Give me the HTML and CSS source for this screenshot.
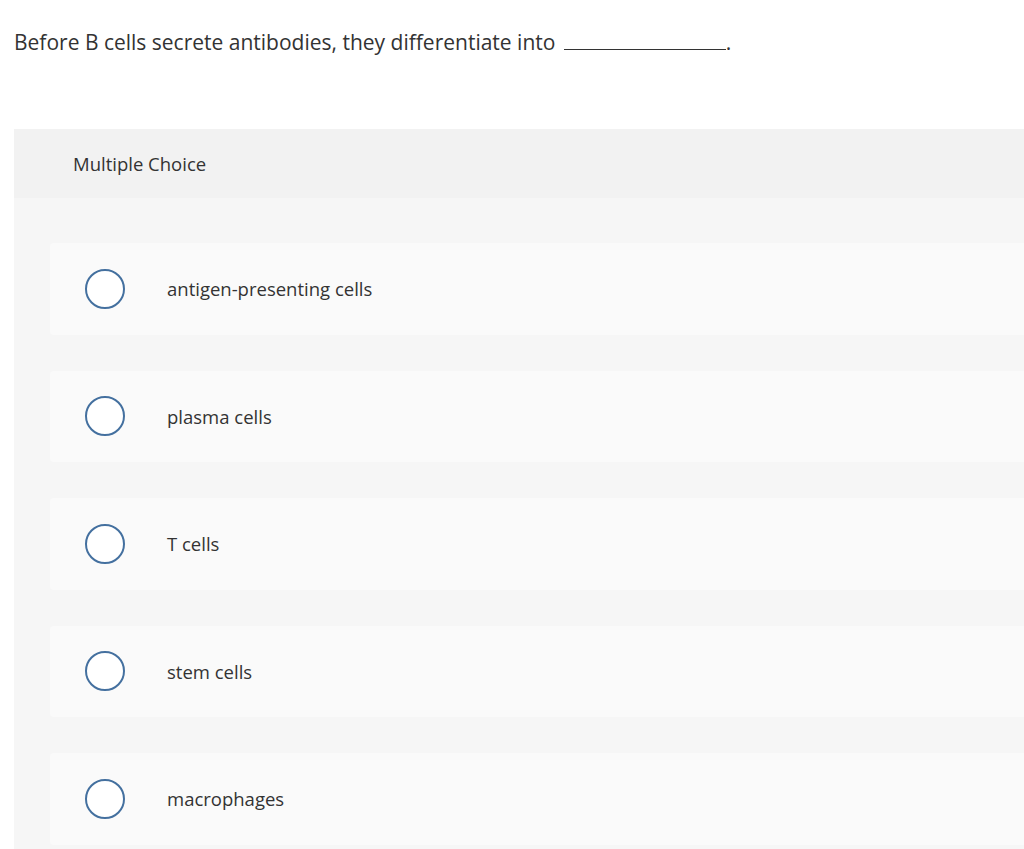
FILE: index.html
```html
<!DOCTYPE html>
<html>
<head>
<meta charset="utf-8">
<link rel="stylesheet" href="styles.css">
</head>
<body>
<div class="page">
  <p class="question">Before B cells secrete antibodies, they differentiate into <span class="blank"></span>.</p>
  <div class="panel">
    <div class="panel-head">Multiple Choice</div>
    <div class="panel-body">
      <div class="option"><span class="radio"></span><span class="label">antigen-presenting cells</span></div>
      <div class="option"><span class="radio"></span><span class="label">plasma cells</span></div>
      <div class="option"><span class="radio"></span><span class="label">T cells</span></div>
      <div class="option"><span class="radio"></span><span class="label">stem cells</span></div>
      <div class="option"><span class="radio"></span><span class="label">macrophages</span></div>
    </div>
  </div>
</div>
</body>
</html>
```
FILE: styles.css
```css
html, body {
  margin: 0;
  padding: 0;
  background: #fff;
  overflow: hidden;
}
body {
  font-family: "Open Sans", "Liberation Sans", sans-serif;
  color: #333;
}
.page {
  padding: 0 0 0 14px;
}
.question {
  margin: 0;
  padding-top: 27px;
  font-size: 21px;
  line-height: 30px;
  height: 102px;
}
.blank {
  display: inline-block;
  width: 162px;
  border-bottom: 1px solid #333;
  margin-left: 3px;
  vertical-align: baseline;
}
.panel {
  width: 1100px;
}
.panel-head {
  background: #f2f2f2;
  height: 69px;
  display: flex;
  align-items: center;
  padding-left: 59px;
  font-size: 18.5px;
}
.panel-body {
  background: #f6f6f6;
  padding: 45px 0 20px 36px;
  display: flex;
  flex-direction: column;
  gap: 36px;
}
.option {
  background: #fafafa;
  border-radius: 4px;
  height: 91.5px;
  display: flex;
  align-items: center;
  padding-left: 35px;
}
.radio {
  width: 36px;
  height: 36px;
  border: 2px solid #44709f;
  border-radius: 50%;
  background: #fff;
  flex: none;
}
.label {
  margin-left: 42px;
  font-size: 18.5px;
  line-height: 24px;
  margin-top: 1px;
}
```
